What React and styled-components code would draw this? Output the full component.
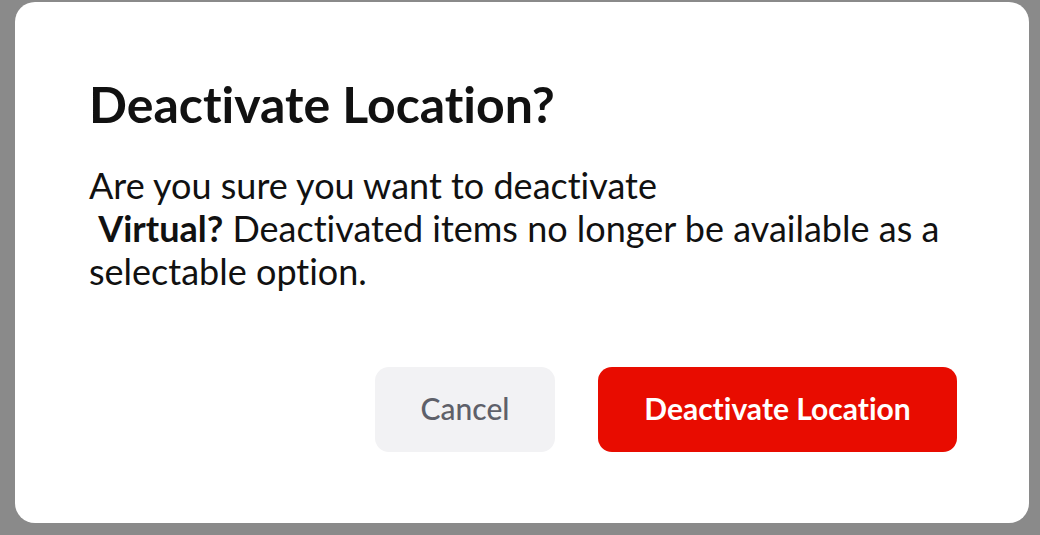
import React from 'react';
import styled, { createGlobalStyle } from 'styled-components';

const GlobalStyle = createGlobalStyle`
  html, body {
    margin: 0;
    padding: 0;
    height: 100%;
    background: #8a8a8a;
  }
  #root {
    height: 100%;
  }
  * {
    box-sizing: border-box;
  }
`;

const Backdrop = styled.div`
  height: 100%;
  padding: 2px 11px 12px 15px;
  display: flex;
`;

const Dialog = styled.div`
  flex: 1;
  display: flex;
  flex-direction: column;
  background: #ffffff;
  border-radius: 20px;
  padding: 72px 72px 71px 74px;
  font-family: Lato, 'Liberation Sans', sans-serif;
  font-variant-ligatures: none;
  color: #111111;
`;

const Title = styled.h2`
  margin: 0;
  font-size: 50px;
  line-height: 1.2;
  font-weight: 700;
`;

const Message = styled.p`
  margin: 30px 0 0;
  font-size: 36px;
  line-height: 43px;
  font-weight: 400;
`;

const Actions = styled.div`
  margin-top: auto;
  display: flex;
  justify-content: flex-end;
  gap: 43px;
`;

const Button = styled.button`
  height: 85px;
  padding: 0 0 4px;
  border: none;
  border-radius: 14px;
  font-family: inherit;
  font-variant-ligatures: none;
  font-size: 30px;
  cursor: pointer;
  width: ${p => p.$width}px;
  background: ${p => (p.$danger ? '#e80c00' : '#f2f2f4')};
  color: ${p => (p.$danger ? '#ffffff' : '#5e6069')};
  font-weight: ${p => (p.$danger ? 700 : 500)};
`;

export default function App() {
  return (
    <>
      <GlobalStyle />
      <Backdrop>
        <Dialog role="dialog">
          <Title>Deactivate Location?</Title>
          <Message>
            Are you sure you want to deactivate
            <br />
            {'\u00a0'}<strong>Virtual?</strong> Deactivated items no longer be available as a selectable option.
          </Message>
          <Actions>
            <Button $width={180}>Cancel</Button>
            <Button $width={359} $danger>Deactivate Location</Button>
          </Actions>
        </Dialog>
      </Backdrop>
    </>
  );
}
